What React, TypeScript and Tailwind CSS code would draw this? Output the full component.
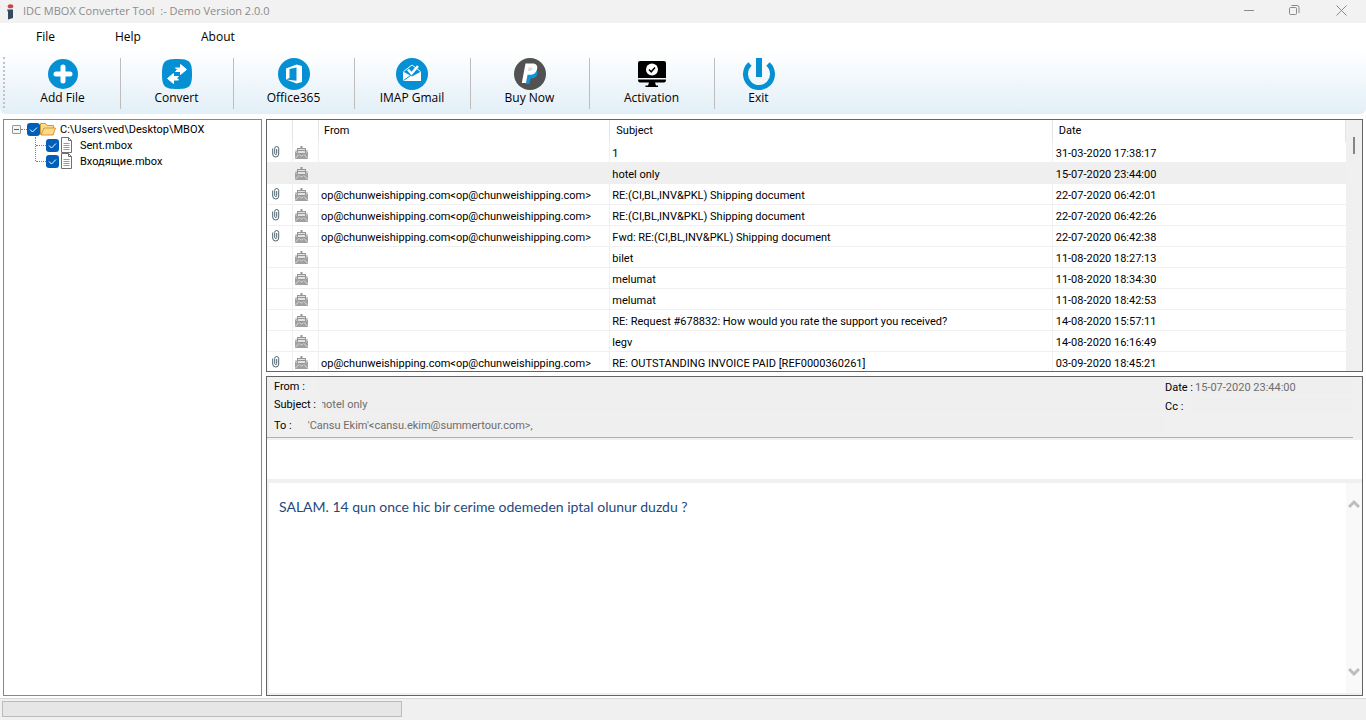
import type { ReactNode } from 'react'

type Mail = { from: string; subject: string; date: string; attached?: boolean }

const SENDER = 'op@chunweishipping.com<op@chunweishipping.com>'

const MAILS: Mail[] = [
  { from: '', subject: '1', date: '31-03-2020 17:38:17', attached: true },
  { from: '', subject: 'hotel only', date: '15-07-2020 23:44:00' },
  { from: SENDER, subject: 'RE:(CI,BL,INV&PKL) Shipping document', date: '22-07-2020 06:42:01', attached: true },
  { from: SENDER, subject: 'RE:(CI,BL,INV&PKL) Shipping document', date: '22-07-2020 06:42:26', attached: true },
  { from: SENDER, subject: 'Fwd: RE:(CI,BL,INV&PKL) Shipping document', date: '22-07-2020 06:42:38', attached: true },
  { from: '', subject: 'bilet', date: '11-08-2020 18:27:13' },
  { from: '', subject: 'melumat', date: '11-08-2020 18:34:30' },
  { from: '', subject: 'melumat', date: '11-08-2020 18:42:53' },
  { from: '', subject: 'RE: Request #678832: How would you rate the support you received?', date: '14-08-2020 15:57:11' },
  { from: '', subject: 'legv', date: '14-08-2020 16:16:49' },
  { from: SENDER, subject: 'RE: OUTSTANDING INVOICE PAID [REF0000360261]', date: '03-09-2020 18:45:21', attached: true },
]

const SELECTED = 1

const AddIcon = () => (
  <svg width="32" height="32" viewBox="0 0 32 32">
    <circle cx="16" cy="16" r="15" fill="#0490d3" />
    <path d="M16 9v14M9 16h14" stroke="#fff" strokeWidth="5" strokeLinecap="round" />
  </svg>
)

const ConvertIcon = () => (
  <svg width="32" height="32" viewBox="0 0 32 32">
    <path d="M16 1C28.500 1 31 3.500 31 16s-2.500 15-15 15S1 28.500 1 16 3.500 1 16 1z" fill="#0490d3" />
    <path d="M14.500 10h5V6.500l6 5-6 5V13.500h-5l2-2z" fill="#fff" stroke="#fff" strokeLinejoin="round" />
    <path d="M17.500 18.500h-5V15.500l-6 5 6 5V22h5l-2-2z" fill="#fff" stroke="#fff" strokeLinejoin="round" />
  </svg>
)

const OfficeIcon = () => (
  <svg width="32" height="32" viewBox="0 0 32 32">
    <circle cx="16" cy="16" r="16" fill="#0490d3" />
    <path d="M8 10.500L18.500 6.500 24 8v16l-5.500 1.500L8 21.500l10.500 1.300V9.500L11.500 11v9L8 21.500z" fill="#fff" />
  </svg>
)

const ImapIcon = () => (
  <svg width="32" height="32" viewBox="0 0 32 32">
    <circle cx="16" cy="16" r="16" fill="#0490d3" />
    <path d="M7.500 13.500L16 7l8.500 6.500" fill="none" stroke="#fff" strokeWidth="1" />
    <path d="M7 13.500l9 5 9-5V23H7z" fill="#fff" />
    <path d="M7.500 22.500l7-5" stroke="#0490d3" />
    <path d="M12 11.500l3.500 4L22 8" fill="none" stroke="#fff" strokeWidth="2.500" />
  </svg>
)

const PayIcon = () => (
  <svg width="32" height="32" viewBox="0 0 32 32">
    <circle cx="16" cy="16" r="16" fill="#525252" />
    <path d="M14 12h8.500c2 2.500.8 8.500-5 8.500h-1L15.500 26h-4z" fill="#0d93dc" />
    <path d="M11.500 5.500h7c4 0 5.500 2.500 4.500 6-.9 3.400-3.400 5.300-7 5.300h-2.500L12 25H7.800z" fill="#fff" />
    <path d="M14.500 9.500h3c1.500 0 1.800 3-2 3.500H14z" fill="#ddd" />
  </svg>
)

const ActivationIcon = () => (
  <svg width="32" height="32" viewBox="0 0 32 32">
    <path d="M4 3h24q2 0 2 2v15H2V5q0-2 2-2z" />
    <path d="M2 21.500h28q0 3-2 3h-9l1 3h2V29H9.500v-1.500H12l1-3H4q-2 0-2-3z" />
    <circle cx="16" cy="11.500" r="6" fill="#fff" />
    <path d="M13 11.500l2.200 2.300L19 9.500" fill="none" stroke="#000" strokeWidth="1.500" />
  </svg>
)

const ExitIcon = () => (
  <svg width="32" height="32" viewBox="0 0 32 32">
    <path d="M7 6a13.500 13.500 0 1 0 18 0" fill="none" stroke="#0490d3" strokeWidth="5" />
    <path d="M16 0v19" stroke="#0490d3" strokeWidth="6" />
  </svg>
)

const TOOLS: { label: string; icon: ReactNode; width: string }[] = [
  { label: 'Add File', icon: <AddIcon />, width: 'w-[115px]' },
  { label: 'Convert', icon: <ConvertIcon />, width: 'w-[113px]' },
  { label: 'Office365', icon: <OfficeIcon />, width: 'w-[121px]' },
  { label: 'IMAP Gmail', icon: <ImapIcon />, width: 'w-[116px]' },
  { label: 'Buy Now', icon: <PayIcon />, width: 'w-[119px]' },
  { label: 'Activation', icon: <ActivationIcon />, width: 'w-[125px]' },
  { label: 'Exit', icon: <ExitIcon />, width: 'w-[89px]' },
]

const ClipIcon = () => (
  <svg width="8" height="12" viewBox="0 0 8 12" fill="none" stroke="#4e6470">
    <path d="M.7 2.500v5.500a3 3 0 0 0 6 0V2.500a2 2 0 0 0-4 0v5a1 1 0 0 0 2 0V3" />
  </svg>
)

const MailIcon = () => (
  <svg width="13" height="13" viewBox="0 0 13 13">
    <path d="M0 4.500h13V13H0z" fill="#a0a0a0" />
    <path d="M0 5l6.500 5L13 5M0 12.500l4-4M13 12.500l-4-4" fill="none" stroke="#dcdcdc" />
    <path d="M2 2h3.500v-2h2v2H11v5l-2 1.500H4L2 7z" fill="#969696" />
    <path d="M3 3h7v1H3zM3 5h7v2H3z" fill="#e2e2e2" />
  </svg>
)

const FolderIcon = () => (
  <svg width="16" height="14" viewBox="0 0 16 14">
    <path d="M.5 12.500v-11h5l1.500 2h6.500v9z" fill="#f9dc8e" stroke="#cf9a35" />
    <path d="M1 13l3-7h11.500l-2.500 7z" fill="#fcd88a" stroke="#d69b34" />
  </svg>
)

const FileIcon = () => (
  <svg width="13" height="16" viewBox="0 0 13 16" fill="none" stroke="#707070">
    <path d="M1.500.5h7l3 3v12h-10z" fill="#fff" />
    <path d="M8.500.5v3h3" />
    <path d="M3.500 6.500h6M3.500 8.500h6M3.500 10.500h6M3.500 12.500h6" stroke="#999" />
  </svg>
)

function TreeCheck({ id }: { id: string }) {
  return (
    <span className="relative block h-[13px] w-[13px] shrink-0">
      <input id={id} type="checkbox" defaultChecked className="block h-[13px] w-[13px] appearance-none rounded-[3px] bg-[#005fb8]" />
      <svg className="pointer-events-none absolute inset-0" width="13" height="13" fill="none" stroke="#fff">
        <path d="M3 6.500l2.500 2.500L10 4.500" />
      </svg>
    </span>
  )
}

function TreeFile({ id, name }: { id: string; name: string }) {
  return (
    <li className="flex h-4 items-center">
      <span className="w-[10px] border-t border-dotted border-[#808080]" />
      <TreeCheck id={id} />
      <label htmlFor={id} className="ml-px flex items-center gap-[7px]">
        <FileIcon />
        <span className="pt-[2px]">{name}</span>
      </label>
    </li>
  )
}

function Field({ id, label, value, row = 'h-[18px]', className }: { id: string; label: string; value: string; row?: string; className: string }) {
  return (
    <div className={`flex items-center ${row}`}>
      <label htmlFor={id} className="shrink-0 pt-[2px] whitespace-pre">{label}</label>
      <input id={id} readOnly value={value} className={`h-4 min-w-0 flex-1 bg-[#efefef] pt-[2px] text-[#6d6d6d] outline-none ${className}`} />
    </div>
  )
}

export default function App() {
  return (
    <div className="flex h-screen flex-col overflow-hidden bg-white font-['Roboto',sans-serif] text-[11px] text-black">
      <header className="flex h-[23px] shrink-0 items-center bg-[#f2f2f2] font-['Open_Sans',sans-serif] text-[11px] text-[#8b8b8b]">
        <svg className="ml-[6px]" width="9" height="16" viewBox="0 0 9 16">
          <ellipse cx="4.500" cy="2.200" rx="2.800" ry="2" fill="#c8454b" />
          <path d="M1 5.500h6V14l-5 1.500V8z" fill="#34495e" />
        </svg>
        <h1 className="ml-2 whitespace-pre">IDC MBOX Converter Tool  :- Demo Version 2.0.0</h1>
        <div className="ml-auto flex h-full">
          <button aria-label="Minimize" className="flex w-[46px] items-center justify-center">
            <svg width="11" height="13" stroke="#8b8b8b"><path d="M0 5.500h10" /></svg>
          </button>
          <button aria-label="Restore" className="flex w-[44px] items-center justify-center">
            <svg width="11" height="13" fill="none" stroke="#8b8b8b">
              <rect x=".5" y="2.500" width="7" height="7" rx="1" />
              <path d="M2.500.5H8q2 0 2 2v5.500" />
            </svg>
          </button>
          <button aria-label="Close" className="flex w-[50px] items-center justify-center">
            <svg width="11" height="13" stroke="#8b8b8b"><path d="M.5.5l10 10M10.500.5l-10 10" /></svg>
          </button>
        </div>
      </header>

      <nav className="flex h-[27px] shrink-0 items-center pl-9 font-['Open_Sans',sans-serif] text-[12px]">
        <button className="w-[79px] text-left">File</button>
        <button className="w-[86px] text-left">Help</button>
        <button className="text-left">About</button>
      </nav>

      <div role="toolbar" className="flex h-16 shrink-0 items-start rounded-md bg-linear-to-b from-white to-[#e2eff7] font-['Open_Sans',sans-serif] text-[12px]">
        <span className="mt-[7px] ml-[3px] h-[51px] w-[3px] border-l-2 border-dotted border-[#c0c4c8]" />
        {TOOLS.map((tool, i) => (
          <div key={tool.label} className="flex">
            <button className={`mt-2 flex flex-col items-center pr-[2px] leading-4 ${tool.width}`}>
              {tool.icon}
              {tool.label}
            </button>
            {i < TOOLS.length - 1 && <span className="mt-2 -ml-px h-[51px] w-px border-r border-[#bdbdbd]" />}
          </div>
        ))}
      </div>

      <main className="mt-[5px] flex min-h-0 flex-1 gap-1 px-[3px] pb-[2px]">
        <aside className="w-[259px] shrink-0 border border-[#828790] pt-px pl-2">
          <div className="flex h-4 items-center">
            <button aria-label="Collapse" className="flex h-[9px] w-[9px] items-center justify-center rounded-[1px] border border-[#969696] bg-[#f4f4f4]">
              <span className="h-px w-[5px] bg-[#4b5fa8]" />
            </button>
            <span className="w-[6px] border-t border-dotted border-[#808080]" />
            <TreeCheck id="root-folder" />
            <label htmlFor="root-folder" className="flex items-center gap-1">
              <FolderIcon />
              <span className="pt-[2px]">C:\Users\ved\Desktop\MBOX</span>
            </label>
          </div>
          <ul className="relative pl-[24px]">
            <li aria-hidden className="absolute top-0 left-[23px] h-6 border-l border-dotted border-[#808080]" />
            <TreeFile id="sent" name="Sent.mbox" />
            <TreeFile id="inbox" name="Входящие.mbox" />
          </ul>
        </aside>

        <div className="flex min-w-0 flex-1 flex-col gap-1">
          <section className="flex h-[253px] shrink-0 overflow-hidden border border-[#646464]">
            <div className="min-w-0 flex-1 overflow-hidden">
              <table className="w-full table-fixed border-separate border-spacing-0">
                <colgroup>
                  <col className="w-[26px]" />
                  <col className="w-[26px]" />
                  <col className="w-[27%]" />
                  <col className="w-[41%]" />
                  <col />
                </colgroup>
                <thead>
                  <tr className="h-[22px] text-left">
                    <th className="border-r border-[#e5e5e5]" aria-label="Attachment" />
                    <th className="border-r border-[#e5e5e5]" aria-label="Status" />
                    <th className="border-r border-[#e5e5e5] pl-[5px] font-normal">From</th>
                    <th className="border-r border-[#e5e5e5] pl-[6px] font-normal">Subject</th>
                    <th className="border-r border-[#e5e5e5] pl-[6px] font-normal">Date</th>
                  </tr>
                </thead>
                <tbody>
                  {MAILS.map((mail, i) => {
                    const cell = i === SELECTED ? 'border-[#efefef]' : 'border-[#f0f0f0]'
                    return (
                      <tr key={i} className={`h-[21px] leading-4 whitespace-nowrap ${i === SELECTED ? 'bg-[#efefef]' : ''}`}>
                        <td className={`border-r border-b pl-[5px] ${cell}`}>{mail.attached && <ClipIcon />}</td>
                        <td className={`border-r border-b pt-px pl-[2px] ${cell}`}><MailIcon /></td>
                        <td className={`border-r border-b pt-1 pl-[2px] ${cell}`}>{mail.from}</td>
                        <td className={`border-r border-b pt-1 pl-[2px] ${cell}`}>{mail.subject}</td>
                        <td className={`border-b pt-1 pl-[3px] ${cell}`}>{mail.date}</td>
                      </tr>
                    )
                  })}
                </tbody>
              </table>
            </div>
            <div className="w-4 shrink-0 bg-[#f0f0f0] pt-[17px] pl-[7px]">
              <div className="h-[17px] w-[2px] bg-[#858585]" />
            </div>
          </section>

          <section className="flex min-h-0 flex-1 flex-col border border-[#646464] bg-[#f0f0f0]">
            <div className="mr-[9px] flex h-[61px] shrink-0 border-b border-[#99b4d1] pl-[7px]">
              <div className="min-w-0 flex-1">
                <Field id="from" label="From :" value="" className="ml-3" />
                <Field id="subject" label="Subject :" value="hotel only" className="ml-[6px] indent-[-2px]" />
                <Field id="to" label="To :" value="'Cansu Ekim'<cansu.ekim@summertour.com>," row="h-6" className="ml-4" />
              </div>
              <div className="w-[188px]">
                <Field id="date" label="Date :" value="15-07-2020 23:44:00" row="h-5" className="ml-[2px]" />
                <Field id="cc" label="Cc :" value="" className="ml-2" />
              </div>
            </div>
            <div className="mt-[2px] h-[39px] shrink-0 bg-white" />
            <div className="mt-1 mb-[2px] ml-[2px] flex min-h-0 flex-1 bg-white">
              <p className="flex-1 pt-[13px] pl-[10px] font-['Lato',sans-serif] text-[14px] text-[#1f497d]">
                SALAM. 14 qun once hic bir cerime odemeden iptal olunur duzdu ?
              </p>
              <div className="flex w-4 flex-col items-center justify-between bg-[#f9f9f9] pt-4 pb-4">
                <svg width="12" height="10" fill="none" stroke="#bdbdbd" strokeWidth="3"><path d="M1 8l5-5 5 5" /></svg>
                <svg width="12" height="10" fill="none" stroke="#bdbdbd" strokeWidth="3"><path d="M1 2l5 5 5-5" /></svg>
              </div>
            </div>
          </section>
        </div>
      </main>

      <footer className="h-[22px] shrink-0 border-t border-[#d7d7d7] bg-[#f0f0f0] pt-[2px] pl-[2px]">
        <div role="progressbar" aria-label="Progress" className="h-4 w-[400px] border border-[#bcbcbc] bg-[#e6e6e6]" />
      </footer>
    </div>
  )
}
